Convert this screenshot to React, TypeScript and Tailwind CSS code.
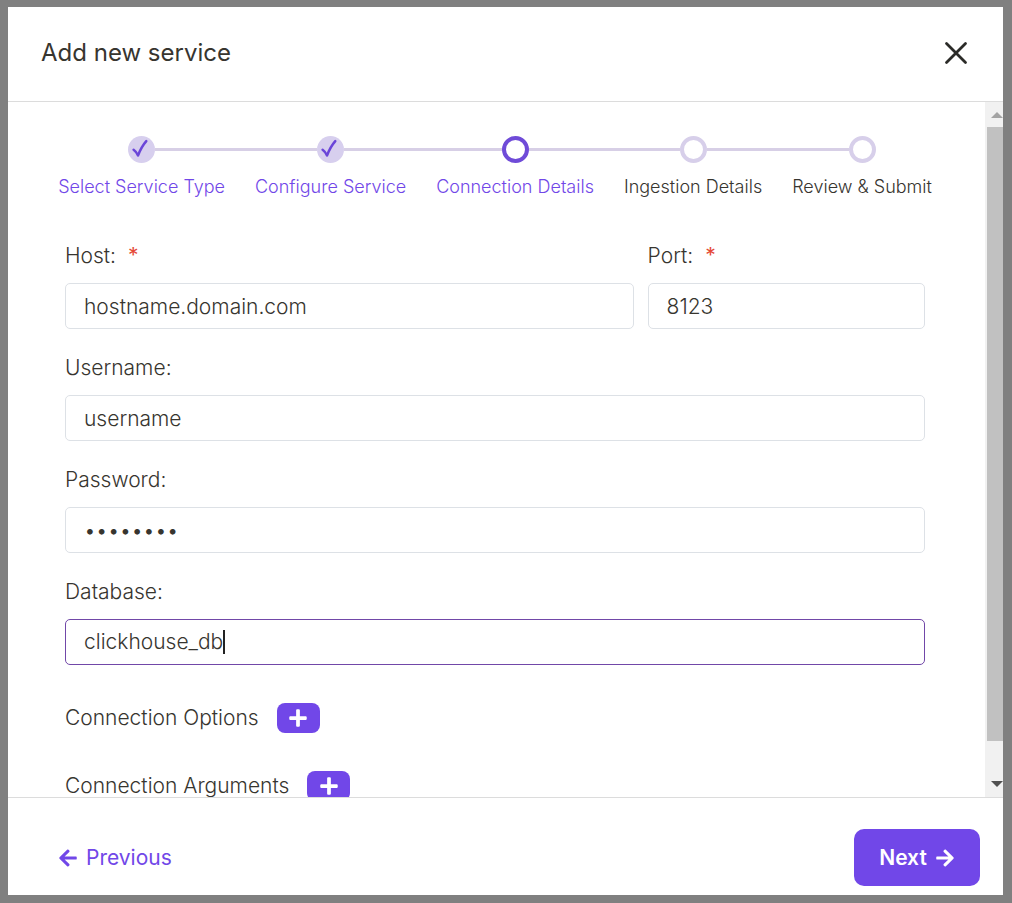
import { useState } from "react";
import { FaArrowLeft, FaArrowRight, FaPlus } from "react-icons/fa";

type StepState = "done" | "active" | "pending";

const steps: { label: string; state: StepState }[] = [
  { label: "Select Service Type", state: "done" },
  { label: "Configure Service", state: "done" },
  { label: "Connection Details", state: "active" },
  { label: "Ingestion Details", state: "pending" },
  { label: "Review & Submit", state: "pending" },
];

const markerStyle: Record<StepState, string> = {
  done: "bg-[#d7cfee]",
  active: "border-4 border-[#6f4bd8] bg-white",
  pending: "border-4 border-[#d7cfea] bg-white",
};

function Stepper() {
  return (
    <ol className="flex justify-center">
      {steps.map((step, i) => (
        <li key={step.label} className="flex flex-col gap-2.5">
          <div className="flex items-center">
            <span className={`h-[3px] flex-1 ${i === 0 ? "" : "bg-[#d7cfe6]"}`} />
            <span
              className={`flex size-[27px] items-center justify-center rounded-full ${markerStyle[step.state]}`}
            >
              {step.state === "done" && (
                <svg viewBox="0 0 27 27" className="size-full" fill="none" aria-hidden="true">
                  <path
                    d="M5.6 13.8 Q8 15.4 10 19.5 Q13.6 10.5 18.3 5.2"
                    stroke="#6a45d8"
                    strokeWidth="2.5"
                    strokeLinecap="round"
                    strokeLinejoin="round"
                  />
                </svg>
              )}
            </span>
            <span className={`h-[3px] flex-1 ${i === steps.length - 1 ? "" : "bg-[#d7cfe6]"}`} />
          </div>
          <span
            className={`px-[15px] text-lg leading-7 font-light whitespace-nowrap ${
              step.state === "pending" ? "text-[#37352f]" : "text-[#7147e8]"
            }`}
          >
            {step.label}
          </span>
        </li>
      ))}
    </ol>
  );
}

const inputStyle =
  "h-[46px] w-full rounded-[5px] border border-[#dde1e6] bg-white px-[18px] text-[21px] font-light text-[#37352f] outline-none";

function Field({
  id,
  label,
  value,
  type = "text",
  required = false,
}: {
  id: string;
  label: string;
  value: string;
  type?: string;
  required?: boolean;
}) {
  const [text, setText] = useState(value);
  return (
    <div className="flex min-w-0 flex-col gap-[13px]">
      <label htmlFor={id} className="flex gap-3 text-[21px] leading-7 font-light">
        {label}:{required && <span className="font-normal text-[#e54937]">*</span>}
      </label>
      <input
        id={id}
        type={type}
        required={required}
        value={text}
        onChange={(e) => setText(e.target.value)}
        className={inputStyle}
      />
    </div>
  );
}

function ActiveField({ id, label, value }: { id: string; label: string; value: string }) {
  const [text, setText] = useState(value);
  return (
    <div className="flex flex-col gap-[13px]">
      <label htmlFor={id} className="text-[21px] leading-7 font-light">
        {label}:
      </label>
      <div className="flex h-[46px] items-center rounded-[5px] border border-[#7147a8] bg-white px-[18px]">
        <input
          id={id}
          value={text}
          onChange={(e) => setText(e.target.value)}
          className="field-sizing-content min-w-0 text-[21px] font-light text-[#37352f] caret-transparent outline-none"
        />
        <span className="h-6 w-0.5 bg-[#222222]" />
      </div>
    </div>
  );
}

function AddRow({ label }: { label: string }) {
  return (
    <div className="flex items-center gap-[18px]">
      <span className="text-[21px] leading-7 font-light">{label}</span>
      <button
        type="button"
        aria-label={`Add ${label}`}
        className="flex h-[30px] w-[43px] items-center justify-center rounded-lg bg-[#7147e8] text-white"
      >
        <FaPlus className="size-5" />
      </button>
    </div>
  );
}

function Scrollbar() {
  return (
    <div className="flex w-[18px] shrink-0 flex-col bg-[#f1f1f1]" aria-hidden="true">
      <svg className="h-[25px] w-full shrink-0" viewBox="0 0 18 25">
        <path d="M6 16 L12 10 L18 16 Z" fill="#a3a3a3" />
      </svg>
      <div className="ml-0.5 flex-1 bg-[#c1c1c1]" />
      <svg className="h-14 w-full shrink-0" viewBox="0 0 18 56">
        <path d="M6 40 L18 40 L12 46 Z" fill="#505050" />
      </svg>
    </div>
  );
}

export default function App() {
  return (
    <div className="h-screen bg-[#808080] pt-[7px] pr-[9px] pb-2 pl-2 font-['Inter',sans-serif] text-[#37352f]">
      <div role="dialog" aria-labelledby="title" className="flex h-full flex-col bg-white">
        <header className="flex shrink-0 items-center justify-between border-b border-[#dcdcdc] px-[33px] pt-7 pb-[30px]">
          <h1 id="title" className="text-2xl leading-9">
            Add new service
          </h1>
          <button type="button" aria-label="Close" className="text-[#2b2b28]">
            <svg viewBox="0 0 28 28" className="size-7" fill="none" aria-hidden="true">
              <path d="M4.5 4.5 L23.5 23.5 M23.5 4.5 L4.5 23.5" stroke="currentColor" strokeWidth="2.8" strokeLinecap="round" />
            </svg>
          </button>
        </header>

        <div className="flex min-h-0 flex-1">
          <main className="min-w-0 flex-1 overflow-hidden pt-[34px] pr-[60px] pl-[57px]">
            <Stepper />
            <form className="mt-[41px] flex flex-col gap-[25px]">
              <div className="grid grid-cols-[41fr_20fr] gap-3.5">
                <Field id="host" label="Host" value="hostname.domain.com" required />
                <Field id="port" label="Port" value="8123" required />
              </div>
              <Field id="username" label="Username" value="username" />
              <Field id="password" label="Password" value="password" type="password" />
              <ActiveField id="database" label="Database" value="clickhouse_db" />
            </form>
            <div className="mt-[38px] flex flex-col gap-[38px]">
              <AddRow label="Connection Options" />
              <AddRow label="Connection Arguments" />
            </div>
          </main>
          <Scrollbar />
        </div>

        <footer className="flex h-[98px] shrink-0 items-center justify-between border-t border-[#dcdcdc] pt-[22px] pr-[23px] pl-[50px]">
          <button type="button" className="flex items-center gap-2 text-[21px] leading-7 text-[#7147e8]">
            <FaArrowLeft className="size-5" />
            Previous
          </button>
          <button
            type="button"
            className="flex h-[57px] w-[126px] items-center justify-center gap-2 rounded-[10px] bg-[#7147e8] text-[21px] leading-7 font-semibold text-white"
          >
            Next
            <FaArrowRight className="size-5" />
          </button>
        </footer>
      </div>
    </div>
  );
}
